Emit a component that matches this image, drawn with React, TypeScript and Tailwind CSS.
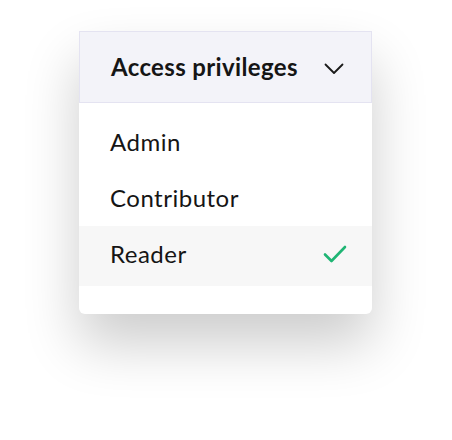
import React from "react";

export default function App() {
  const font = { fontFamily: '"Lato", "Noto Sans", sans-serif' };
  return (
    <div className="w-[452px] h-[440px] bg-white" style={font}>
      <div className="pt-[31px] pl-[79px]">
        <div className="w-[293px] bg-white rounded-b-[6px] shadow-[0_30px_55px_rgba(0,0,0,0.2)]">
          <div className="h-[72px] bg-[#f3f3f9] border border-[#e4e3f1] flex items-center justify-between pl-[31px] pr-[27px]">
            <span className="text-[24px] font-bold text-[#151515] tracking-[0.35px]">Access privileges</span>
            <svg className="mt-[4px]" width="20" height="12" viewBox="0 0 20 12" fill="none">
              <path d="M1.5 1.5 L10 10 L18.5 1.5" stroke="#1a1a1a" strokeWidth="1.8" strokeLinecap="round" strokeLinejoin="round" />
            </svg>
          </div>
          <div className="pt-[11px] pb-[28px]">
            <div className="h-[56px] flex items-center pl-[31px] text-[24px] text-[#151515] tracking-[0.5px]">Admin</div>
            <div className="h-[56px] flex items-center pl-[31px] text-[24px] text-[#151515] tracking-[0.5px]">Contributor</div>
            <div className="h-[60px] pb-[4px] flex items-center justify-between pl-[31px] pr-[25px] bg-[#f7f7f7] text-[24px] text-[#151515] tracking-[0.5px]">
              <span>Reader</span>
              <svg width="24" height="20" viewBox="0 0 24 20" fill="none">
                <path d="M2 10.5 L8.5 17 L22 3" stroke="#1fb574" strokeWidth="2.6" strokeLinecap="round" strokeLinejoin="round" />
              </svg>
            </div>
          </div>
        </div>
      </div>
    </div>
  );
}
